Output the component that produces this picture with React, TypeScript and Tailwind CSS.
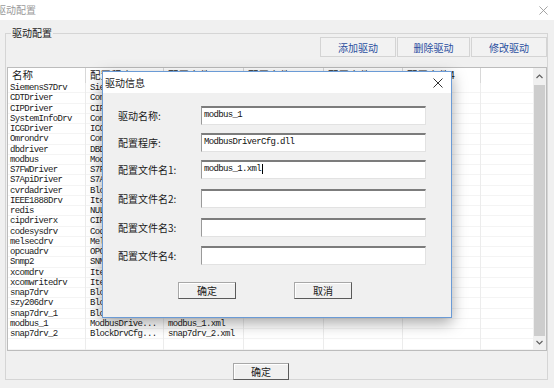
import React from "react";

const rows: [string, string, string][] = [
  ["SiemensS7Drv", "SiemensS7Dr...", ""],
  ["CDTDriver", "CommonDrvC...", ""],
  ["CIPDriver", "CIPDriverC...", ""],
  ["SystemInfoDrv", "CommonDrvC...", ""],
  ["ICGDriver", "ICGDriverC...", ""],
  ["Omrondrv", "CommonDrvC...", ""],
  ["dbdriver", "DBDriverCfg...", ""],
  ["modbus", "ModbusDrive...", ""],
  ["S7FWDriver", "S7FWDriver...", ""],
  ["S7ApiDriver", "S7ApiDriver...", ""],
  ["cvrdadriver", "BlockDrvCfg...", ""],
  ["IEEE1888Drv", "ItemDrvCfg...", ""],
  ["redis", "NULL", ""],
  ["cipdriverx", "CIPDriverC...", ""],
  ["codesysdrv", "CodesysDrv...", ""],
  ["melsecdrv", "MelsecDrvC...", ""],
  ["opcuadrv", "OPCUADrvCf...", ""],
  ["Snmp2", "SNMPDrvCfg...", ""],
  ["xcomdrv", "ItemDrvCfg...", ""],
  ["xcomwritedrv", "ItemDrvCfg...", ""],
  ["snap7drv", "BlockDrvCfg...", ""],
  ["szy206drv", "BlockDrvCfg...", ""],
  ["snap7drv_1", "BlockDrvCfg...", ""],
  ["modbus_1", "ModbusDrive...", "modbus_1.xml"],
  ["snap7drv_2", "BlockDrvCfg...", "snap7drv_2.xml"],
  ["", "", ""],
];

const CloseX = ({ size, color }: { size: number; color: string }) => (
  <svg width={size} height={size} viewBox="0 0 10 10">
    <line x1="0.5" y1="0.5" x2="9.5" y2="9.5" stroke={color} strokeWidth="1" />
    <line x1="9.5" y1="0.5" x2="0.5" y2="9.5" stroke={color} strokeWidth="1" />
  </svg>
);

const Chevron = ({ up }: { up: boolean }) => (
  <svg width="7" height="5" viewBox="0 0 7 5">
    <polyline
      points={up ? "0.5,4 3.5,1 6.5,4" : "0.5,1 3.5,4 6.5,1"}
      fill="none"
      stroke="#606060"
      strokeWidth="1.2"
    />
  </svg>
);

const cellBase = "h-[10.25px] leading-[10.25px] border-r border-[#ececec] overflow-hidden whitespace-nowrap";
const headBase = "pl-[4px] border-r border-[#d8d8d8] overflow-hidden whitespace-nowrap";

export default function App() {
  return (
    <div className="relative w-[554px] h-[388px] bg-[#f0f0f0] overflow-hidden font-['Noto_Sans_CJK_SC',sans-serif] text-[#1a1a1a]">
      {/* window title bar */}
      <div className="h-[20px] bg-white flex items-center justify-between">
        <span className="ml-[-4px] text-[10px] leading-[14px] text-[#9a9a9a]">驱动配置</span>
        <div className="mr-[6px]">
          <CloseX size={9} color="#9a9a9a" />
        </div>
      </div>

      {/* group box */}
      <div className="relative mt-[13px] ml-[5px] w-[543px] h-[347px] border border-[#d5d5d5] flex flex-col">
        <span className="absolute left-[5px] top-[-8px] px-[1px] bg-[#f0f0f0] text-[10px] leading-[14px] text-[#1a1a1a]">
          驱动配置
        </span>

        {/* top buttons */}
        <div className="mt-[3px] flex justify-end gap-[1px]">
          {[
            ["添加驱动", "w-[76px]"],
            ["删除驱动", "w-[73px]"],
            ["修改驱动", "w-[76px]"],
          ].map(([t, w]) => (
            <div
              key={t}
              className={`${w} h-[20px] flex items-center justify-center bg-[#f2f2f2] border border-[#d4d4d4] text-[10px] text-[#2b4fa0]`}
            >
              {t}
            </div>
          ))}
        </div>

        {/* list view */}
        <div className="mt-[10px] ml-[1px] w-[540px] border border-[#bcbcbc] bg-white flex">
          <div className="flex-1 flex flex-col">
            {/* header */}
            <div className="h-[15px] flex text-[10.5px] leading-[14px] text-[#1a1a1a]">
              <div className={`w-[78px] ${headBase}`}>名称</div>
              <div className={`w-[78px] ${headBase}`}>配置程序</div>
              <div className={`w-[80px] ${headBase}`}>配置文件1</div>
              <div className={`w-[80px] ${headBase}`}>配置文件2</div>
              <div className={`w-[79px] ${headBase}`}>配置文件3</div>
              <div className={`w-[78px] ${headBase}`}>配置文件4</div>
              <div className="flex-1" />
            </div>
            {/* rows */}
            <div className="flex flex-col font-['Liberation_Mono',monospace] text-[9px] tracking-[-0.65px] text-[#1a1a1a]">
              {rows.map((r, i) => (
                <div key={i} className="flex shadow-[inset_0_-1px_0_#f4f4f4]">
                  <div className={`w-[78px] pl-[2px] ${cellBase}`}>{r[0]}</div>
                  <div className={`w-[78px] pl-[4px] ${cellBase}`}>{r[1]}</div>
                  <div className={`w-[80px] pl-[4px] ${cellBase}`}>{r[2]}</div>
                  <div className={`w-[80px] ${cellBase}`} />
                  <div className={`w-[79px] ${cellBase}`} />
                  <div className={`w-[78px] ${cellBase}`} />
                  <div className="flex-1" />
                </div>
              ))}
            </div>
          </div>
          {/* scrollbar */}
          <div className="w-[13px] bg-[#f0f0f0] flex flex-col">
            <div className="h-[16px] flex items-center justify-center">
              <Chevron up />
            </div>
            <div className="flex-1 mx-[1px] mt-[1px] bg-[#cdcdcd]" />
            <div className="h-[14px] flex items-center justify-center">
              <Chevron up={false} />
            </div>
          </div>
        </div>

        {/* bottom OK */}
        <div className="mt-[12px] ml-[227px]">
          <div className="w-[56px] h-[17px] flex items-center justify-center bg-[#f0f0f0] border border-[#a8a8a8] border-r-[#5a5a5a] border-b-[#5a5a5a] shadow-[inset_1px_1px_0_#ffffff] text-[10px] text-[#1a1a1a]">
            确定
          </div>
        </div>
      </div>

      {/* dialog */}
      <div className="absolute left-[102px] top-[71px] w-[350px] h-[247px] border border-[#6b9bd6] bg-[#f0f0f0] shadow-[0_5px_14px_rgba(0,0,0,0.35)] flex flex-col">
        <div className="h-[21px] bg-white flex items-center justify-between pl-[2px] pr-[8px]">
          <span className="text-[10px] leading-[14px] text-[#1a1a1a]">驱动信息</span>
          <CloseX size={10} color="#333333" />
        </div>
        <div className="flex flex-col">
          {[
            ["驱动名称:", "modbus_1", "mt-[13px]", false],
            ["配置程序:", "ModbusDriverCfg.dll", "mt-[8px]", false],
            ["配置文件名1:", "modbus_1.xml", "mt-[8px]", true],
            ["配置文件名2:", "", "mt-[10px]", false],
            ["配置文件名3:", "", "mt-[10px]", false],
            ["配置文件名4:", "", "mt-[9px]", false],
          ].map(([label, value, mt, caret]) => (
            <div key={label as string} className={`${mt} flex items-center`}>
              <div className="w-[98px] pl-[15px] text-[10px] leading-[14px] text-[#1a1a1a]">{label}</div>
              <div className="w-[225px] h-[19px] bg-white border-t-2 border-t-[#7c7c7c] border-l border-l-[#9a9a9a] border-r border-r-[#e2e2e2] border-b border-b-[#e2e2e2] flex items-start pt-[1px] pl-[2px] font-['Liberation_Mono',monospace] text-[9px] leading-[12px] tracking-[-0.65px] text-[#111]">
                <span>{value}</span>
                {caret ? <span className="ml-[1px] mt-[1px] w-[1px] h-[10px] bg-black" /> : null}
              </div>
            </div>
          ))}
          <div className="mt-[17px] pl-[75px] flex gap-[58px]">
            {["确定", "取消"].map((t) => (
              <div
                key={t}
                className="w-[58px] h-[17px] flex items-center justify-center bg-[#f0f0f0] border border-[#a8a8a8] border-r-[#5a5a5a] border-b-[#5a5a5a] shadow-[inset_1px_1px_0_#ffffff] text-[10px] text-[#1a1a1a]"
              >
                {t}
              </div>
            ))}
          </div>
        </div>
      </div>
    </div>
  );
}
